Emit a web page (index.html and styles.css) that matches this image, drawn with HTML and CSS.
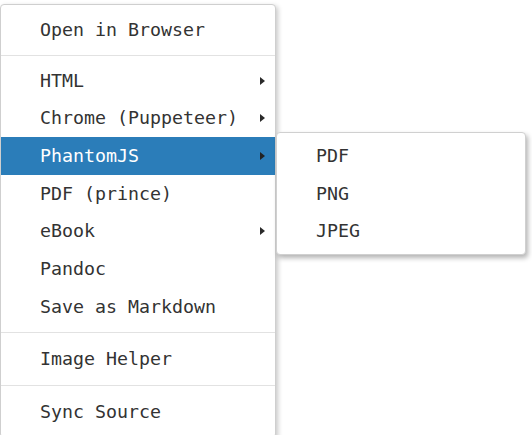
FILE: index.html
```html
<!DOCTYPE html>
<html>
<head>
<meta charset="utf-8">
<link rel="stylesheet" href="styles.css">
</head>
<body>
<div class="stage">
  <div class="menu">
    <div class="item">Open in Browser</div>
    <div class="sep"></div>
    <div class="item sub">HTML<span class="arrow"></span></div>
    <div class="item sub">Chrome (Puppeteer)<span class="arrow"></span></div>
    <div class="item sub active">PhantomJS<span class="arrow"></span></div>
    <div class="item">PDF (prince)</div>
    <div class="item sub">eBook<span class="arrow"></span></div>
    <div class="item">Pandoc</div>
    <div class="item">Save as Markdown</div>
    <div class="sep wide"></div>
    <div class="item">Image Helper</div>
    <div class="sep wide"></div>
    <div class="item">Sync Source</div>
  </div>
  <div class="submenu">
    <div class="item">PDF</div>
    <div class="item">PNG</div>
    <div class="item">JPEG</div>
  </div>
</div>
</body>
</html>
```
FILE: styles.css
```css
html, body {
  margin: 0;
  padding: 0;
  background: #ffffff;
  overflow: hidden;
}
body {
  font-family: "DejaVu Sans Mono", "Liberation Mono", monospace;
  font-size: 18.3px;
  color: #333333;
}
.stage {
  position: relative;
  padding-top: 4px;
  height: 431px;
}
.menu {
  width: 274px;
  border: 1px solid #cfcfcf;
  border-radius: 4px;
  background: #fff;
  padding: 6px 0;
  box-shadow: 2px 2px 5px rgba(0,0,0,0.22);
}
.item {
  display: flex;
  align-items: center;
  justify-content: space-between;
  padding: 6px 10px 6px 39px;
  line-height: 25.67px;
  white-space: nowrap;
}
.item.active {
  background: #2b7db9;
  color: #ffffff;
}
.arrow {
  width: 0;
  height: 0;
  border-left: 5px solid #2a2a2a;
  border-top: 4px solid transparent;
  border-bottom: 4px solid transparent;
}
.item.active .arrow {
  border-left-color: #222;
}
.sep {
  height: 1px;
  background: #e2e2e2;
  margin: 6px 0;
}
.sep.wide {
  margin: 7px 0;
}
.submenu {
  position: absolute;
  left: 276px;
  top: 132px;
  width: 248px;
  border: 1px solid #d0d0d0;
  border-radius: 4px;
  background: #fff;
  padding: 4px 0;
  box-shadow: 2px 3px 5px rgba(0,0,0,0.3);
}
```
